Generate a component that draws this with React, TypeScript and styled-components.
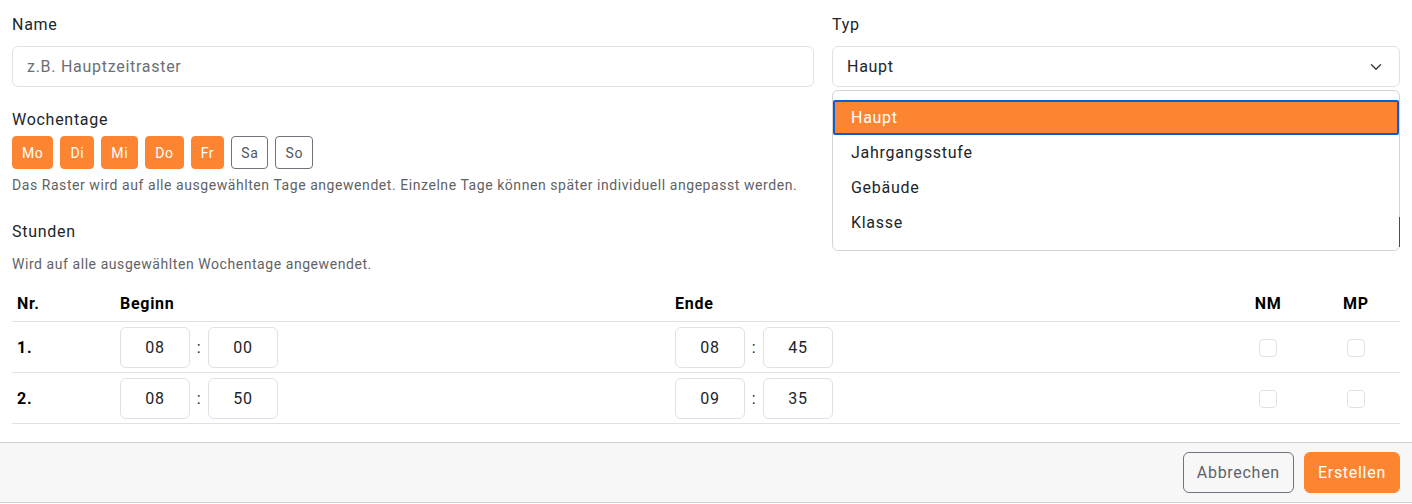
import React from 'react';
import styled, { createGlobalStyle } from 'styled-components';

const colors = {
    Orange: '#fd8531',
    Text: '#212529',
    Muted: '#5f6266',
    Border: '#dee2e6',
    Focus: '#0b5ccf',
};

const GlobalStyle = createGlobalStyle`
    body {
        margin: 0;
        background: #fff;
        font-family: Roboto, "Noto Sans", "Liberation Sans", sans-serif;
        letter-spacing: 0.045em;
        color: ${colors.Text};
    }
    * { box-sizing: border-box; }
    input, button { letter-spacing: 0.045em; }
`;

const DAYS = [
    { label: 'Mo', active: true },
    { label: 'Di', active: true },
    { label: 'Mi', active: true },
    { label: 'Do', active: true },
    { label: 'Fr', active: true },
    { label: 'Sa', active: false },
    { label: 'So', active: false },
];

const TYPES = ['Haupt', 'Jahrgangsstufe', 'Gebäude', 'Klasse'];

const HOURS = [
    { nr: '1.', start: ['08', '00'], end: ['08', '45'] },
    { nr: '2.', start: ['08', '50'], end: ['09', '35'] },
];

const Chevron = () => (
    <svg width='12' height='8' viewBox='0 0 12 8' fill='none'>
        <path d='M1.5 1.8 6 6.2l4.5-4.4' stroke='#343a40' strokeWidth='1.4' strokeLinecap='round' strokeLinejoin='round' />
    </svg>
);

const TimeField = ({ value }: { value: string[] }) => (
    <TimeGroup>
        <TimeInput defaultValue={value[0]} />
        <Colon>:</Colon>
        <TimeInput defaultValue={value[1]} />
    </TimeGroup>
);

const App = () => {
    return (
        <>
            <GlobalStyle />
            <Body>
                <TopRow>
                    <Column>
                        <Label>Name</Label>
                        <TextInput placeholder='z.B. Hauptzeitraster' />
                        <SectionLabel>Wochentage</SectionLabel>
                        <DayRow>
                            {DAYS.map((d) => (
                                <DayButton key={d.label} $active={d.active}>
                                    {d.label}
                                </DayButton>
                            ))}
                        </DayRow>
                        <Hint>
                            Das Raster wird auf alle ausgewählten Tage angewendet. Einzelne Tage können später individuell angepasst werden.
                        </Hint>
                    </Column>
                    <Column>
                        <Label>Typ</Label>
                        <SelectWrap>
                            <SelectBox>
                                <span>Haupt</span>
                                <Chevron />
                            </SelectBox>
                            <OptionList>
                                {TYPES.map((t, i) => (
                                    <OptionItem key={t} $selected={i === 0}>
                                        {t}
                                    </OptionItem>
                                ))}
                            </OptionList>
                        </SelectWrap>
                    </Column>
                </TopRow>

                <StundenLabel>Stunden</StundenLabel>
                <SubHint>Wird auf alle ausgewählten Wochentage angewendet.</SubHint>

                <Table>
                    <colgroup>
                        <col style={{ width: 103 }} />
                        <col style={{ width: 555 }} />
                        <col style={{ width: 554 }} />
                        <col style={{ width: 88 }} />
                        <col style={{ width: 88 }} />
                    </colgroup>
                    <thead>
                        <tr>
                            <Th>Nr.</Th>
                            <Th>Beginn</Th>
                            <Th>Ende</Th>
                            <Th $center>NM</Th>
                            <Th $center>MP</Th>
                        </tr>
                    </thead>
                    <tbody>
                        {HOURS.map((h) => (
                            <tr key={h.nr}>
                                <Td><strong>{h.nr}</strong></Td>
                                <Td><TimeField value={h.start} /></Td>
                                <Td><TimeField value={h.end} /></Td>
                                <Td $center><CheckBox type='checkbox' /></Td>
                                <Td $center><CheckBox type='checkbox' /></Td>
                            </tr>
                        ))}
                    </tbody>
                </Table>
            </Body>
            <Footer>
                <SecondaryButton>Abbrechen</SecondaryButton>
                <PrimaryButton>Erstellen</PrimaryButton>
            </Footer>
        </>
    );
};

const Body = styled.div`
    padding: 13px 12px 0;
`;

const TopRow = styled.div`
    display: grid;
    grid-template-columns: 802px 568px;
    column-gap: 18px;
`;

const Column = styled.div`
    display: flex;
    flex-direction: column;
    align-items: flex-start;
`;

const Label = styled.div`
    font-size: 16px;
    line-height: 24px;
    margin-bottom: 9px;
`;

const TextInput = styled.input`
    width: 100%;
    height: 41px;
    border: 1px solid ${colors.Border};
    border-radius: 6px;
    padding: 0 14px;
    font-family: inherit;
    font-size: 16px;
    color: ${colors.Text};
    &::placeholder { color: #6b6f73; }
`;

const SectionLabel = styled.div`
    font-size: 16px;
    line-height: 24px;
    margin-top: 21px;
    margin-bottom: 4px;
`;

const DayRow = styled.div`
    display: flex;
    gap: 7px;
`;

const DayButton = styled.button<{ $active: boolean }>`
    height: 33px;
    padding: 0 9px;
    border-radius: 4px;
    font-family: inherit;
    font-size: 14px;
    border: 1px solid ${(p) => (p.$active ? colors.Orange : '#6c737a')};
    background: ${(p) => (p.$active ? colors.Orange : '#fff')};
    color: ${(p) => (p.$active ? '#fff' : '#51575d')};
`;

const Hint = styled.div`
    font-size: 14px;
    line-height: 21px;
    letter-spacing: 0.04em;
    color: ${colors.Muted};
    margin-top: 6px;
    white-space: nowrap;
`;

const SelectWrap = styled.div`
    position: relative;
    width: 100%;
`;

const SelectBox = styled.div`
    height: 41px;
    border: 1px solid ${colors.Border};
    border-radius: 6px;
    padding: 0 17px 0 14px;
    display: flex;
    align-items: center;
    justify-content: space-between;
    font-size: 16px;
`;

const OptionList = styled.ul`
    position: absolute;
    top: 44px;
    left: 0;
    right: 0;
    margin: 0;
    padding: 9px 0 10px;
    list-style: none;
    background: #fff;
    border: 1px solid #d2d4d6;
    border-radius: 6px;
    z-index: 2;
    &::after {
        content: '';
        position: absolute;
        right: -1px;
        bottom: 3px;
        width: 1px;
        height: 30px;
        background: #4a4d50;
    }
`;

const OptionItem = styled.li<{ $selected: boolean }>`
    height: 35px;
    display: flex;
    align-items: center;
    padding-left: 16px;
    font-size: 16px;
    color: ${(p) => (p.$selected ? '#fff' : colors.Text)};
    background: ${(p) => (p.$selected ? colors.Orange : 'transparent')};
    border: 2px solid ${(p) => (p.$selected ? colors.Focus : 'transparent')};
    border-radius: ${(p) => (p.$selected ? '2px' : '0')};
`;

const StundenLabel = styled.div`
    font-size: 16px;
    line-height: 24px;
    margin-top: 24px;
`;

const SubHint = styled.div`
    font-size: 14px;
    line-height: 21px;
    letter-spacing: 0.04em;
    color: ${colors.Muted};
    margin-top: 10px;
    margin-bottom: 8px;
`;

const Table = styled.table`
    width: 1388px;
    border-collapse: collapse;
    table-layout: fixed;
`;

const Th = styled.th<{ $center?: boolean }>`
    text-align: ${(p) => (p.$center ? 'center' : 'left')};
    font-size: 16px;
    line-height: 24px;
    font-weight: 700;
    color: #000;
    padding: 9px 5px 5px;
    border-bottom: 1px solid ${colors.Border};
`;

const Td = styled.td<{ $center?: boolean }>`
    text-align: ${(p) => (p.$center ? 'center' : 'left')};
    vertical-align: middle;
    font-size: 16px;
    color: #000;
    padding: 4px 5px 4px;
    height: 51px;
    border-bottom: 1px solid ${colors.Border};
`;

const TimeGroup = styled.div`
    display: flex;
    align-items: center;
`;

const TimeInput = styled.input`
    width: 70px;
    height: 41px;
    border: 1px solid ${colors.Border};
    border-radius: 6px;
    text-align: center;
    font-family: inherit;
    font-size: 16px;
    color: ${colors.Text};
`;

const Colon = styled.span`
    width: 18px;
    text-align: center;
    font-size: 16px;
    color: ${colors.Text};
`;

const CheckBox = styled.input`
    appearance: none;
    width: 18px;
    height: 18px;
    margin: 0;
    border: 1px solid ${colors.Border};
    border-radius: 4px;
    background: #fff;
    vertical-align: middle;
`;

const Footer = styled.div`
    margin-top: 18px;
    background: #f7f7f7;
    border-top: 1px solid #d0d0d0;
    border-bottom: 1px solid #d0d0d0;
    padding: 9px 12px;
    display: flex;
    justify-content: flex-end;
    gap: 10px;
`;

const SecondaryButton = styled.button`
    height: 41px;
    padding: 0 13px;
    border: 1px solid #6c757d;
    border-radius: 6px;
    background: transparent;
    color: #5c636a;
    font-family: inherit;
    font-size: 16px;
`;

const PrimaryButton = styled.button`
    height: 41px;
    padding: 0 13px;
    border: 1px solid ${colors.Orange};
    border-radius: 6px;
    background: ${colors.Orange};
    color: #fff;
    font-family: inherit;
    font-size: 16px;
`;

export default App;
